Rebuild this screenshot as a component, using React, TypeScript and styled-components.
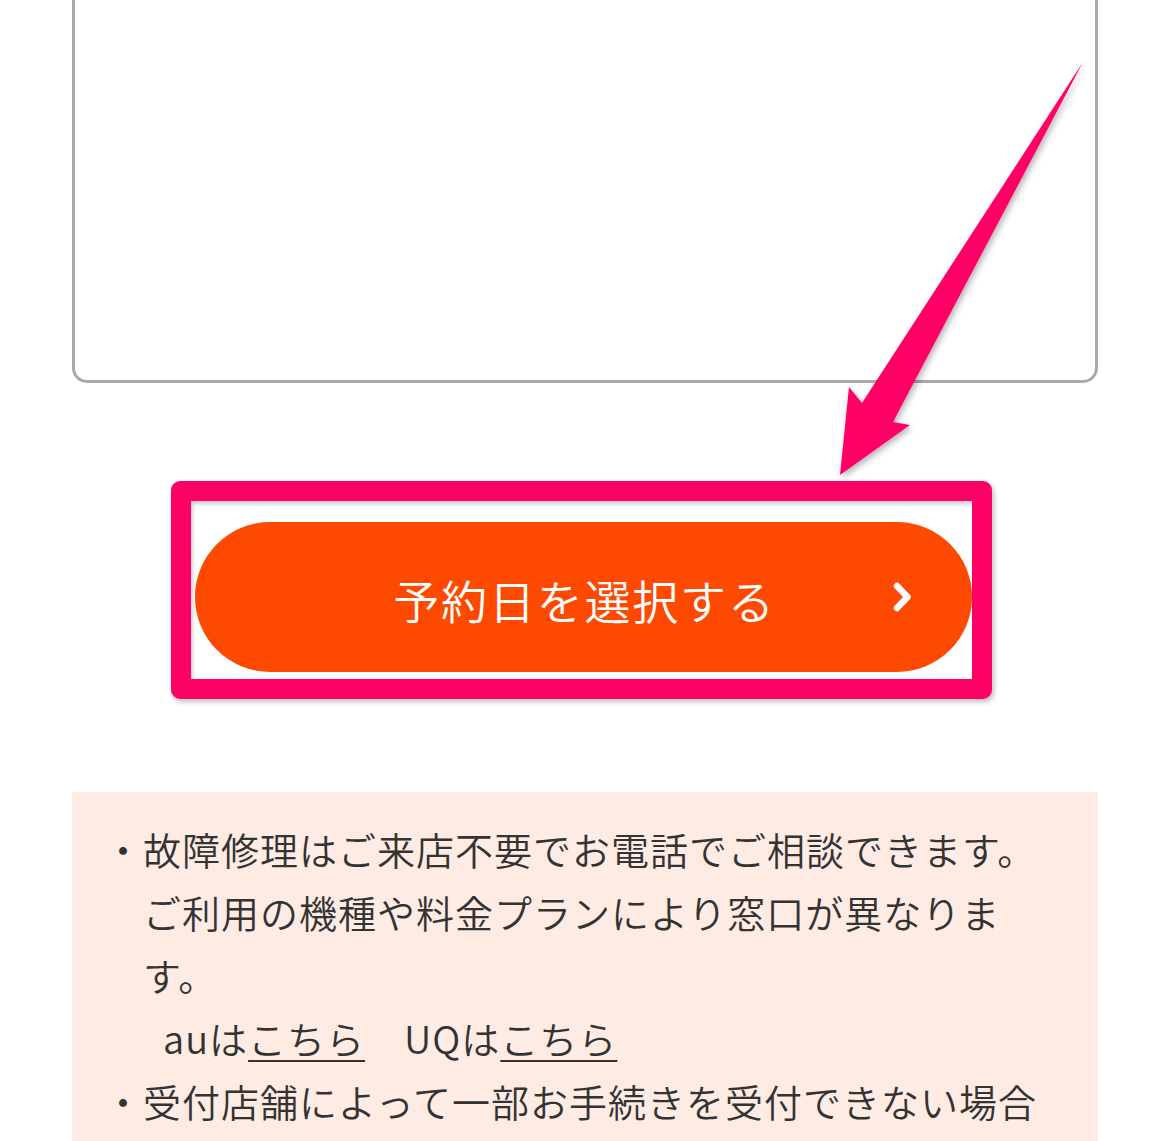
import React from 'react';
import styled, { createGlobalStyle } from 'styled-components';

const colors = {
  ORANGE: '#fe4a00',
  PINK: '#ff0066',
  BORDER: '#a9a9a9',
  NOTE_BG: '#fdebe4',
  TEXT: '#333333',
};

const GlobalStyle = createGlobalStyle`
  body {
    margin: 0;
    background: #ffffff;
    font-family: "Noto Sans CJK JP", "Noto Sans", sans-serif;
  }
`;

const Chevron = () => (
  <svg width='22' height='32' viewBox='0 0 22 32' fill='none'>
    <path
      d='M5 5 L15.5 16 L5 27'
      stroke='#ffffff'
      strokeWidth='6.5'
      strokeLinecap='round'
      strokeLinejoin='round'
    />
  </svg>
);

const Arrow = () => (
  <ArrowSvg width='1170' height='1141' viewBox='0 0 1170 1141'>
    <defs>
      <filter id='arrowShadow' x='-20%' y='-20%' width='140%' height='140%'>
        <feDropShadow dx='2' dy='3' stdDeviation='3' floodColor='#000' floodOpacity='0.3' />
      </filter>
    </defs>
    <path
      d='M1083 62 L893 422 L910 425 L840 475 L849 387 L862 403 Z'
      fill={colors.PINK}
      strokeLinejoin='round'
      filter='url(#arrowShadow)'
    />
  </ArrowSvg>
);

export default function App() {
  return (
    <>
      <GlobalStyle />
      <Page>
        <FormBox />
        <ButtonArea>
          <SubmitButton type='button'>
            <ButtonLabel>予約日を選択する</ButtonLabel>
            <ChevronWrap>
              <Chevron />
            </ChevronWrap>
          </SubmitButton>
          <HighlightFrame />
        </ButtonArea>
        <NoteBox>
          <NoteItem>
            ・故障修理はご来店不要でお電話でご相談できます。ご利用の機種や料金プランにより窓口が異なります。
            <LinkRow>
              auは<NoteLink>こちら</NoteLink>　UQは<NoteLink>こちら</NoteLink>
            </LinkRow>
          </NoteItem>
          <NoteItem>・受付店舗によって一部お手続きを受付できない場合があります。</NoteItem>
        </NoteBox>
        <Arrow />
      </Page>
    </>
  );
}

const Page = styled.div`
  position: relative;
  width: 1170px;
  height: 1141px;
  overflow: hidden;
  background: #ffffff;
`;

const FormBox = styled.div`
  box-sizing: border-box;
  margin: -20px 72px 0 72px;
  height: 403px;
  border: 3px solid ${colors.BORDER};
  border-radius: 15px;
  background: #ffffff;
`;

const ButtonArea = styled.div`
  position: relative;
  padding: 139px 0 120px 195px;
`;

const SubmitButton = styled.button`
  position: relative;
  display: flex;
  align-items: center;
  justify-content: center;
  width: 777px;
  height: 150px;
  padding: 0;
  border: none;
  border-radius: 75px;
  background: ${colors.ORANGE};
  color: #ffffff;
  font-family: inherit;
  cursor: pointer;
`;

const ButtonLabel = styled.span`
  font-size: 46px;
  font-weight: 350;
  letter-spacing: 1.8px;
  line-height: 1;
  margin-top: 4px;
  margin-left: 2px;
`;

const ChevronWrap = styled.span`
  position: absolute;
  right: 58px;
  top: 50%;
  display: flex;
  transform: translateY(-50%);
`;

const HighlightFrame = styled.div`
  position: absolute;
  left: 171px;
  top: 98px;
  box-sizing: border-box;
  width: 821px;
  height: 218px;
  border: 20px solid ${colors.PINK};
  border-radius: 9px;
  box-shadow: 2px 3px 5px rgba(0, 0, 0, 0.25), inset 2px 3px 4px rgba(0, 0, 0, 0.2);
  pointer-events: none;
`;

const NoteBox = styled.div`
  box-sizing: border-box;
  margin: 0 72px;
  height: 400px;
  padding: 25px 38px 0 32px;
  background: ${colors.NOTE_BG};
  color: ${colors.TEXT};
  font-size: 38px;
  font-weight: 350;
  letter-spacing: 1px;
  line-height: 63px;
`;

const NoteItem = styled.div`
  padding-left: 39px;
  text-indent: -39px;
`;

const LinkRow = styled.div`
  padding-left: 20px;
  text-indent: 0;
`;

const NoteLink = styled.a`
  color: ${colors.TEXT};
  text-decoration: underline;
  text-decoration-thickness: 2px;
  text-underline-offset: 6px;
`;

const ArrowSvg = styled.svg`
  position: absolute;
  left: 0;
  top: 0;
  pointer-events: none;
`;
